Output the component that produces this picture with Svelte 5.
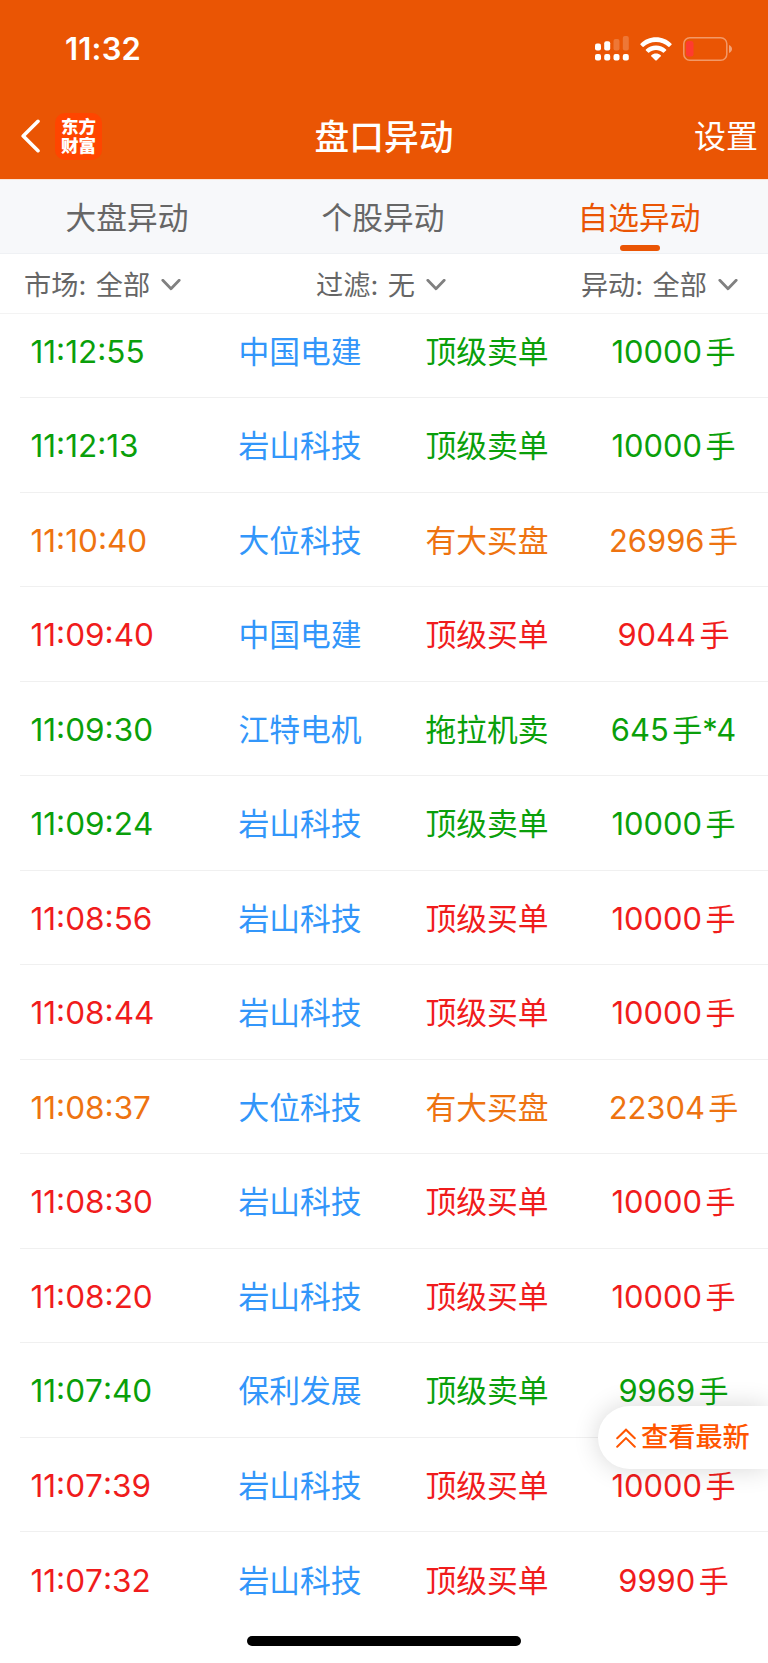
<script>
  const tabs = ['大盘异动', '个股异动', '自选异动'];
  const activeTab = 2;

  const filters = [
    { label: '市场', value: '全部' },
    { label: '过滤', value: '无' },
    { label: '异动', value: '全部' },
  ];

  const rows = [
    { time: '11:12:55', name: '中国电建', type: '顶级卖单', num: '10000', tone: 'sell' },
    { time: '11:12:13', name: '岩山科技', type: '顶级卖单', num: '10000', tone: 'sell' },
    { time: '11:10:40', name: '大位科技', type: '有大买盘', num: '26996', tone: 'big' },
    { time: '11:09:40', name: '中国电建', type: '顶级买单', num: '9044', tone: 'buy' },
    { time: '11:09:30', name: '江特电机', type: '拖拉机卖', num: '645', suffix: '*4', tone: 'sell' },
    { time: '11:09:24', name: '岩山科技', type: '顶级卖单', num: '10000', tone: 'sell' },
    { time: '11:08:56', name: '岩山科技', type: '顶级买单', num: '10000', tone: 'buy' },
    { time: '11:08:44', name: '岩山科技', type: '顶级买单', num: '10000', tone: 'buy' },
    { time: '11:08:37', name: '大位科技', type: '有大买盘', num: '22304', tone: 'big' },
    { time: '11:08:30', name: '岩山科技', type: '顶级买单', num: '10000', tone: 'buy' },
    { time: '11:08:20', name: '岩山科技', type: '顶级买单', num: '10000', tone: 'buy' },
    { time: '11:07:40', name: '保利发展', type: '顶级卖单', num: '9969', tone: 'sell' },
    { time: '11:07:39', name: '岩山科技', type: '顶级买单', num: '10000', tone: 'buy' },
    { time: '11:07:32', name: '岩山科技', type: '顶级买单', num: '9990', tone: 'buy' },
  ];
</script>

<div class="screen">
  <header>
    <div class="status">
      <span class="clock">11:32</span>
      <div class="indicators">
        <svg class="signal" width="34" height="25" viewBox="0 0 34 25" fill="#fff">
          <rect x="0" y="7.5" width="6" height="7" rx="2" />
          <rect x="9.2" y="5.3" width="6" height="9.2" rx="2" />
          <rect x="18.5" y="3" width="6" height="11.5" rx="2" opacity=".2" />
          <rect x="27.8" y="0" width="6" height="14.5" rx="2" opacity=".2" />
          <rect x="0" y="18" width="6" height="6.5" rx="2" />
          <rect x="9.2" y="18" width="6" height="6.5" rx="2" />
          <rect x="18.5" y="18" width="6" height="6.5" rx="2" />
          <rect x="27.8" y="18" width="6" height="6.5" rx="2" />
        </svg>
        <svg class="wifi" width="32" height="24" viewBox="0 0 32 24" fill="#fff">
          <path d="M16 .3C22 .3 27.500 2.600 31.500 6.700Q32 7.200 31.500 7.700L29.400 9.800Q28.900 10.200 28.400 9.800C25 6.600 20.700 4.900 16 4.900S7 6.600 3.600 9.800Q3.100 10.200 2.600 9.800L.5 7.700Q0 7.200 .5 6.700C4.500 2.600 10 .3 16 .3Z" />
          <path d="M16 8.500C19.900 8.500 23.400 10 26.100 12.500Q26.600 13 26.100 13.500L23.900 15.600Q23.400 16 22.900 15.600C21 13.900 18.600 13 16 13S11 13.900 9.100 15.600Q8.600 16 8.100 15.600L5.900 13.500Q5.400 13 5.900 12.500C8.600 10 12.100 8.500 16 8.500Z" />
          <path d="M16 16.600C17.800 16.600 19.400 17.200 20.700 18.300Q21.200 18.800 20.700 19.300L16.500 23.400Q16 23.800 15.500 23.400L11.300 19.300Q10.800 18.800 11.300 18.300C12.600 17.200 14.200 16.600 16 16.600Z" />
        </svg>
        <svg class="battery" width="50" height="24" viewBox="0 0 50 24">
          <rect x=".8" y=".8" width="43" height="22.400" rx="6" fill="none" stroke="#fff" stroke-opacity=".4" stroke-width="1.500" />
          <rect x="3" y="4" width="7.500" height="15.500" rx="2.500" fill="#ff3b30" />
          <path d="M46 8C50 9.500 50 14.500 46 16Z" fill="#fff" opacity=".45" />
        </svg>
      </div>
    </div>
    <nav class="bar">
      <div class="left">
        <svg width="20" height="34" viewBox="0 0 20 34" fill="none" stroke="#fff" stroke-width="3.600" stroke-linecap="round" stroke-linejoin="round">
          <path d="M18 2.300L3.200 17L18 31.700" />
        </svg>
        <div class="logo"><span>东方</span><span>财富</span></div>
      </div>
      <h1>盘口异动</h1>
      <span class="settings">设置</span>
    </nav>
  </header>

  <div class="tabs">
    {#each tabs as tab, i}
      <div class="tab" class:active={i === activeTab}>{tab}</div>
    {/each}
  </div>

  <div class="filters">
    {#each filters as f}
      <div class="filter">
        <span>{f.label}:</span>
        <span class="value">{f.value}</span>
        <svg width="20" height="13" viewBox="0 0 20 13" fill="none" stroke="#808080" stroke-width="2.800" stroke-linecap="round" stroke-linejoin="round">
          <path d="M1.800 1.300L10 9.800L18.200 1.300" />
        </svg>
      </div>
    {/each}
  </div>

  <main>
    <div class="list">
      {#each rows as r}
        <div class="row {r.tone}">
          <span class="time">{r.time}</span>
          <span class="name">{r.name}</span>
          <span class="type">{r.type}</span>
          <span class="volume"><span class="num">{r.num}</span>手{#if r.suffix}<span class="num suffix">{r.suffix}</span>{/if}</span>
        </div>
      {/each}
    </div>
  </main>

  <div class="latest">
    <svg width="20" height="20" viewBox="0 0 20 20" fill="none" stroke="#ff5500" stroke-width="2" stroke-linecap="round" stroke-linejoin="miter">
      <path d="M1.200 10.300L10 1.700L18.800 10.300M1.200 18.700L10 10.100L18.800 18.700" />
    </svg>
    <span>查看最新</span>
  </div>
  <div class="home"></div>
</div>

<style>
  :global(body) {
    margin: 0;
    background: #fff;
  }
  .screen {
    position: relative;
    width: 768px;
    height: 1663px;
    overflow: hidden;
    display: flex;
    flex-direction: column;
    background: #fff;
    font-family: Inter, 'Noto Sans CJK SC', sans-serif;
    color: #666;
  }
  header {
    height: 179px;
    flex: none;
    background: #ea5504;
    color: #fff;
    display: flex;
    flex-direction: column;
  }
  .status {
    height: 97px;
    box-sizing: border-box;
    padding: 0 35px 0 65px;
    display: flex;
    justify-content: space-between;
    align-items: center;
  }
  .clock {
    font-size: 31px;
    font-weight: 600;
    letter-spacing: 0.2px;
  }
  .indicators {
    display: flex;
    align-items: center;
    gap: 11px;
  }
  .bar {
    height: 78px;
    display: grid;
    grid-template-columns: 1fr auto 1fr;
    align-items: center;
    padding: 0 10px 0 20px;
  }
  .left {
    display: flex;
    align-items: center;
    gap: 15px;
  }
  .logo {
    width: 47px;
    height: 47px;
    border-radius: 10px;
    background: #ff4500;
    display: flex;
    flex-direction: column;
    align-items: center;
    justify-content: center;
    font-size: 17.5px;
    line-height: 19.3px;
    font-weight: 900;
  }
  h1 {
    margin: 2px 5px 0 -5px;
    font-size: 34.7px;
    line-height: 50px;
    font-weight: 500;
  }
  .settings {
    justify-self: end;
    margin-top: 1px;
    font-size: 32px;
    line-height: 46px;
  }
  .tabs {
    height: 75px;
    flex: none;
    box-sizing: border-box;
    background: #f7f8fa;
    border-top: 1px solid #fbe3d6;
    border-bottom: 1px solid #eff1f4;
    display: grid;
    grid-template-columns: repeat(3, 1fr);
  }
  .tab {
    position: relative;
    height: 73px;
    text-align: center;
    font-size: 30.7px;
    line-height: 76px;
    text-indent: -2px;
  }
  .active {
    color: #ea5504;
  }
  .active::after {
    content: '';
    position: absolute;
    left: 50%;
    bottom: 2.5px;
    width: 40px;
    height: 6px;
    margin-left: -20px;
    border-radius: 3px;
    background: #ea5504;
  }
  .filters {
    height: 59px;
    flex: none;
    padding: 0 30px 0 24px;
    display: flex;
    justify-content: space-between;
    align-items: center;
    border-bottom: 1px solid #f3f3f3;
    font-size: 27.2px;
    line-height: 40px;
  }
  .filter {
    display: flex;
    align-items: center;
    padding-top: 4px;
  }
  .value {
    margin: 0 11px 0 9.5px;
  }
  main {
    flex: 1;
    overflow: hidden;
  }
  .list {
    margin-top: -10.2px;
  }
  .row {
    height: 94.5px;
    margin-left: 20px;
    padding-top: 2px;
    box-sizing: border-box;
    display: grid;
    grid-template-columns: 187px 187px 187px 187px;
    align-items: center;
    text-align: center;
    border-bottom: 1px solid #f0f0f0;
    font-size: 30.8px;
    line-height: 46px;
  }
  .row:last-child {
    border-bottom: 0;
  }
  .time {
    padding-left: 10.5px;
    text-align: left;
    font-size: 31.5px;
    font-kerning: none;
  }
  .name {
    color: #3296fa;
  }
  .name,
  .type {
    text-indent: -1px;
  }
  .num {
    font-size: 30.9px;
  }
  .volume {
    display: flex;
    justify-content: center;
    gap: 3.5px;
    margin-left: -2px;
    font-size: 30px;
  }
  .suffix {
    margin-left: -3.5px;
  }
  .sell {
    color: #0a9f0a;
  }
  .buy {
    color: #f01c1c;
  }
  .big {
    color: #ee7310;
  }
  .latest {
    position: absolute;
    right: 0;
    top: 1406px;
    width: 170px;
    height: 63px;
    box-sizing: border-box;
    padding-left: 18px;
    display: flex;
    align-items: center;
    gap: 5px;
    border-radius: 32px 0 0 32px;
    background: #fff;
    box-shadow: 0 0 26px rgba(0, 0, 0, 0.16);
    color: #ff5500;
    font-size: 27.2px;
    line-height: 40px;
    font-weight: 500;
    white-space: nowrap;
  }
  .latest span {
    padding-top: 1px;
  }
  .home {
    position: absolute;
    left: 247px;
    top: 1636px;
    width: 274px;
    height: 10px;
    border-radius: 5px;
    background: #000;
  }
</style>
